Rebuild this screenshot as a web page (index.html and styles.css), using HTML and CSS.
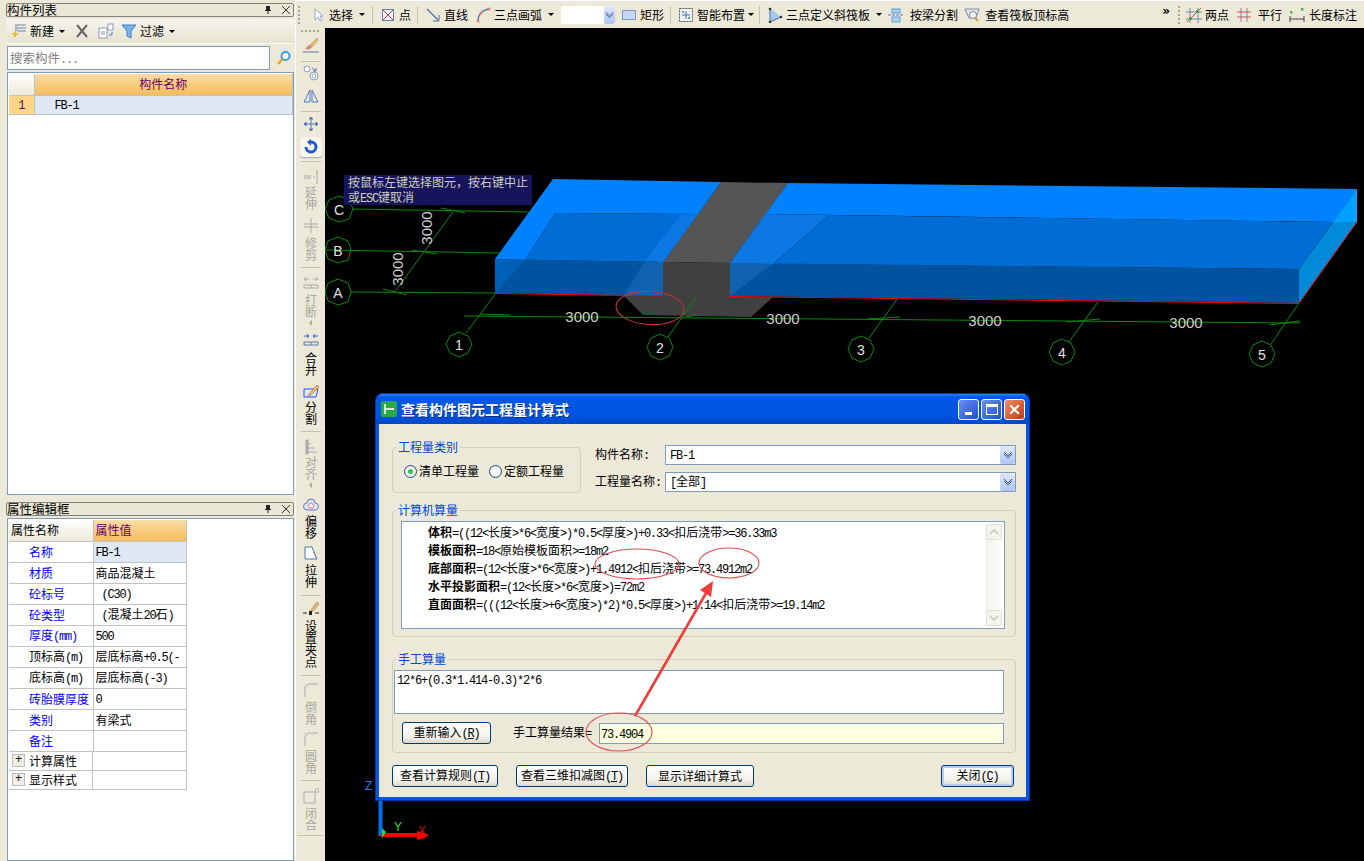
FILE: index.html
```html
<!DOCTYPE html>
<html lang="zh-CN">
<head>
  <meta charset="UTF-8" />
  <title>查看构件图元工程量计算式</title>
  <link rel="stylesheet" href="styles.css">
</head>
<body>
<div class="app">

  <aside class="side">
    <section class="dock dock-list">
      <div class="dock-title">
        <span>构件列表</span>
        <svg class="pin" viewBox="0 0 10 10"><path d="M3 1h4v4h1v1H5.500v3h-1V6H2V5h1z" fill="#222"/></svg>
        <svg class="x" viewBox="0 0 10 10"><path d="M1 1l8 8M9 1l-8 8" stroke="#333" fill="none"/></svg>
      </div>
      <div class="list-tools">
        <svg class="ic" viewBox="0 0 16 16"><rect x="1" y="10" width="6" height="2" fill="#e8c040"/><rect x="3" y="8" width="2" height="6" fill="#e8c040"/><path d="M6 2h9M6 5h9M6 8h9" stroke="#6a7fa8"/><path d="M5 1v7" stroke="#6a7fa8"/></svg>
        <span class="tool-txt">新建</span><i class="arrow"></i>
        <svg class="ic ic-del" viewBox="0 0 16 16"><path d="M3 2l10 12M13 2L3 14" stroke="#666" stroke-width="2" fill="none"/></svg>
        <svg class="ic ic-copy" viewBox="0 0 16 16"><rect x="1" y="5" width="8" height="10" fill="#fff" stroke="#8a9ab8"/><rect x="10" y="1" width="5" height="6" fill="#fff" stroke="#8a9ab8"/><path d="M3 9h4M3 11h4" stroke="#8a9ab8"/><path d="M14 9v3h-3" stroke="#4a78c8" fill="none"/></svg>
        <svg class="ic ic-filter" viewBox="0 0 16 16"><path d="M1 2h14L10 8v7l-4-2V8z" fill="#7cb2ea" stroke="#3f7ac2"/></svg>
        <span class="tool-txt">过滤</span><i class="arrow"></i>
      </div>
      <div class="search-row">
        <div class="search-box">搜索构件<span class="m">...</span></div>
        <svg class="ic" viewBox="0 0 16 16"><circle cx="9.500" cy="6" r="4" fill="#fff" stroke="#3d9be8" stroke-width="2"/><path d="M6.500 9L2 14" stroke="#e8a030" stroke-width="2.500"/></svg>
      </div>
      <div class="grid-frame">
        <table class="grid list-grid">
          <tr><th class="num"></th><th class="head-on">构件名称</th></tr>
          <tr class="row-on"><td class="num-on"><span class="m">1</span></td><td class="fb"><span class="m">FB-1</span></td></tr>
        </table>
      </div>
    </section>

    <section class="dock dock-props">
      <div class="dock-title">
        <span>属性编辑框</span>
        <svg class="pin" viewBox="0 0 10 10"><path d="M3 1h4v4h1v1H5.500v3h-1V6H2V5h1z" fill="#222"/></svg>
        <svg class="x" viewBox="0 0 10 10"><path d="M1 1l8 8M9 1l-8 8" stroke="#333" fill="none"/></svg>
      </div>
      <div class="grid-frame">
        <table class="grid prop-grid">
          <tr><th class="pname-head">属性名称</th><th class="head-on pval-head">属性值</th></tr>
          <tr><td class="pn blue">名称</td><td class="pv cell-on"><span class="m">FB-1</span></td></tr>
          <tr><td class="pn blue">材质</td><td class="pv">商品混凝土</td></tr>
          <tr><td class="pn blue">砼标号</td><td class="pv"><span class="m">&nbsp;(C30)</span></td></tr>
          <tr><td class="pn blue">砼类型</td><td class="pv"><span class="m">&nbsp;(</span>混凝土<span class="m">20</span>石<span class="m">)</span></td></tr>
          <tr><td class="pn blue">厚度<span class="m">(mm)</span></td><td class="pv"><span class="m">500</span></td></tr>
          <tr><td class="pn">顶标高<span class="m">(m)</span></td><td class="pv">层底标高<span class="m">+0.5(-</span></td></tr>
          <tr><td class="pn">底标高<span class="m">(m)</span></td><td class="pv">层底标高<span class="m">(-3)</span></td></tr>
          <tr><td class="pn blue">砖胎膜厚度</td><td class="pv"><span class="m">0</span></td></tr>
          <tr><td class="pn blue">类别</td><td class="pv">有梁式</td></tr>
          <tr><td class="pn blue">备注</td><td class="pv"></td></tr>
          <tr class="short"><td class="pg"><i class="plus">+</i>计算属性</td><td class="pv"></td></tr>
          <tr class="short"><td class="pg"><i class="plus">+</i>显示样式</td><td class="pv"></td></tr>
        </table>
      </div>
    </section>
  </aside>

  <div class="work">
    <header class="topbar">
      <i class="grip"></i>
      <div class="tb t-sel">
        <svg class="ic" viewBox="0 0 16 16"><path d="M5 2v11l3-3 2 4 2-1-2-4h3z" fill="#fff" stroke="#9aa8c4"/></svg>
        <span>选择</span><i class="arrow"></i>
      </div>
      <i class="tsep"></i>
      <div class="tb">
        <svg class="ic" viewBox="0 0 16 16"><rect x="2.500" y="2.500" width="11" height="11" fill="#e8eefa" stroke="#6a7fa8"/><path d="M3 3l10 10M13 3L3 13" stroke="#d84040"/></svg>
        <span>点</span>
      </div>
      <i class="tsep tsep-b"></i>
      <div class="tb">
        <svg class="ic" viewBox="0 0 16 16"><path d="M2 2l11 11" stroke="#4a6ea8" stroke-width="1.200"/><path d="M14 8v6H8" stroke="#4a6ea8" fill="none"/></svg>
        <span>直线</span>
      </div>
      <div class="tb t-arc">
        <svg class="ic" viewBox="0 0 16 16"><path d="M3 14C3 8 7 3 14 2" stroke="#4a78b8" stroke-width="1.300" fill="none"/><circle cx="3" cy="14" r="1.500" fill="#e08080"/><circle cx="6" cy="6" r="1.500" fill="#e08080"/><circle cx="14" cy="2" r="1.500" fill="#e08080"/></svg>
        <span>三点画弧</span><i class="arrow"></i>
      </div>
      <div class="combo t-combo"><b class="drop"><svg viewBox="0 0 10 8"><path d="M1 1l4 4 4-4M1 3l4 4 4-4" stroke="#3f5480" fill="none"/></svg></b></div>
      <div class="tb">
        <svg class="ic" viewBox="0 0 16 16"><rect x="1.500" y="3.500" width="13" height="9" fill="#c4d8f6" stroke="#7a98c8"/></svg>
        <span>矩形</span>
      </div>
      <i class="tsep tsep-b"></i>
      <div class="tb t-smart">
        <svg class="ic" viewBox="0 0 16 16"><rect x="1.500" y="1.500" width="13" height="13" fill="#eef2fa" stroke="#555" stroke-dasharray="2 1"/><path d="M8 4v8M4 8h8" stroke="#4a6ea8"/><circle cx="5" cy="5" r="1" fill="#3a8a3a"/><circle cx="11" cy="11" r="1" fill="#3a8a3a"/></svg>
        <span>智能布置</span><i class="arrow"></i>
      </div>
      <i class="tsep tsep-c"></i>
      <div class="tb">
        <svg class="ic" viewBox="0 0 16 16"><path d="M3 1l11 9-11 5z" fill="#a8c8ee"/><path d="M3 1v14l11-5" stroke="#4a6ea8" fill="none"/><circle cx="3" cy="2" r="1.300" fill="#333"/><circle cx="14" cy="10" r="1.300" fill="#333"/><circle cx="3" cy="15" r="1.300" fill="#333"/></svg>
        <span>三点定义斜筏板</span><i class="arrow"></i>
      </div>
      <div class="tb t-split">
        <svg class="ic" viewBox="0 0 16 16"><rect x="4" y="2" width="8" height="4" fill="#a8d4f4" stroke="#6a98d0"/><rect x="4" y="10" width="8" height="5" fill="#a8d4f4" stroke="#6a98d0"/><path d="M0 8h16" stroke="#5a7ab8" stroke-dasharray="3 1"/></svg>
        <span>按梁分割</span>
      </div>
      <div class="tb t-look">
        <svg class="ic" viewBox="0 0 16 16"><path d="M1 2h14l-3 9H5z" fill="#dfe6f2" stroke="#7a8aa8"/><circle cx="9" cy="8" r="3.500" fill="#f4f8ff" stroke="#888"/><path d="M11 11l3 3" stroke="#d8a040" stroke-width="2"/></svg>
        <span>查看筏板顶标高</span>
      </div>
      <span class="more">»</span>
      <i class="grip grip-b"></i>
      <div class="tb">
        <svg class="ic" viewBox="0 0 16 16"><path d="M4 1v15M12 1v15M0 5h16M0 12h16" stroke="#7a88a8"/><path d="M1 15L15 1" stroke="#d84040"/><rect x="10" y="3" width="3" height="3" fill="#50a050"/><rect x="3" y="10" width="3" height="3" fill="#50a050"/></svg>
        <span>两点</span>
      </div>
      <div class="tb t-par">
        <svg class="ic" viewBox="0 0 16 16"><path d="M5 1v14M11 1v14" stroke="#7a88b8"/><path d="M1 5h14M1 10h14" stroke="#d05050"/></svg>
        <span>平行</span>
      </div>
      <div class="tb t-dim">
        <svg class="ic" viewBox="0 0 16 16"><rect x="1" y="4" width="2.500" height="2.500" fill="#50b050"/><rect x="12" y="1" width="2.500" height="2.500" fill="#50b050"/><path d="M1 9v6M15 9v6M1 12h14" stroke="#444"/></svg>
        <span>长度标注</span><i class="arrow"></i>
      </div>
    </header>

    <div class="stage">
      <nav class="vbar">
        <i class="vgrip"></i>
        <div class="vi t5"><svg class="ic" viewBox="0 0 16 16"><path d="M14 1L7 8l2 2 6-7z" fill="#e8c070" stroke="#a88848" stroke-width=".6"/><path d="M7 8c-3 0-3 3-5 4 3 1 6 0 7-2z" fill="#d8808a"/><path d="M0 15h16" stroke="#5a7ab0"/></svg></div>
        <i class="vsep t8"></i>
        <div class="vi t3"><svg class="ic" viewBox="0 0 16 16"><circle cx="4" cy="4" r="3" fill="#fff" stroke="#8a9ab8"/><circle cx="11" cy="11" r="4" fill="#fff" stroke="#8a9ab8"/><circle cx="11" cy="11" r="2" fill="none" stroke="#8a9ab8"/><path d="M9 3l4 3M13 3v3h-3" stroke="#5a7ab0" fill="none"/></svg></div>
        <div class="vi t7"><svg class="ic" viewBox="0 0 16 16"><path d="M7 2v12H1zM9 2v12h6z" fill="#dfe8f6" stroke="#5a7ab0"/></svg></div>
        <i class="vsep t7"></i>
        <div class="vi t4"><svg class="ic" viewBox="0 0 16 16"><path d="M8 1v14M1 8h14M8 1L6 3h4zM8 15l-2-2h4zM1 8l2-2v4zM15 8l-2-2v4z" stroke="#5a7ab0" fill="#5a7ab0"/></svg></div>
        <div class="vi t5 v-on"><svg class="ic" viewBox="0 0 16 16"><path d="M8 3a5 5 0 1 1-5 5" stroke="#1a5ad8" stroke-width="3" fill="none"/><path d="M8 0v7L4 3z" fill="#1a5ad8"/></svg></div>
        <i class="vsep t4"></i>
        <div class="vi t6 off s2"><svg class="ic" viewBox="0 0 16 16"><path d="M1 8h7M1 10h7M10 9h2M14 2v14" stroke="#aaa"/></svg><span>延伸</span></div>
        <div class="vi t7 off s4"><svg class="ic" viewBox="0 0 16 16"><path d="M1 7h14M1 10h14M8 1v15" stroke="#aaa"/></svg><span>修剪</span></div>
        <i class="vsep t6"></i>
        <div class="vi t6 off s4"><svg class="ic" viewBox="0 0 16 16"><path d="M1 5h5M15 5h-5M3 3L1 5l2 2M13 3l2 2-2 2" stroke="#aaa" fill="none"/><path d="M1 11h14v3H1zM8 11v3" stroke="#aaa" fill="none"/></svg><span>打断</span><em class="small-arrow"></em></div>
        <div class="vi t5 s5"><svg class="ic" viewBox="0 0 16 16"><path d="M1 5h5M15 5h-5M4 3l2 2-2 2M12 3l-2 2 2 2" stroke="#2f62c8" fill="none"/><path d="M1 11h14v3H1zM8 11v3" stroke="#5a7ab0" fill="none"/></svg><span>合并</span></div>
        <div class="vi t7 s2"><svg class="ic" viewBox="0 0 16 16"><path d="M1 6h14l-2 8H1z" fill="#dfe8fa" stroke="#2f4fe0"/><path d="M6 11l8-9 2 2-8 8-3 1z" fill="#e8c070" stroke="#a06030" stroke-width=".6"/></svg><span>分割</span></div>
        <i class="vsep t6"></i>
        <div class="vi t7 off s1"><svg class="ic" viewBox="0 0 16 16"><path d="M3 1h2v14H3zM5 13h9M5 9h6M5 5h3" stroke="#aaa" fill="#aaa"/></svg><span>对齐</span><em class="small-arrow"></em></div>
        <div class="vi t9 s2"><svg class="ic" viewBox="0 0 16 16"><path d="M4 13a3 3 0 0 1 0-7 4 4 0 0 1 8 0 3 3 0 0 1 0 7z" fill="#dfe8fa" stroke="#5a7ab0"/><path d="M6 11a2 2 0 0 1 0-3 2 2 0 0 1 4 0 2 2 0 0 1 0 3z" fill="#fff" stroke="#e06a70"/></svg><span>偏移</span></div>
        <div class="vi t6 s3"><svg class="ic" viewBox="0 0 16 16"><path d="M2 2h7l5 12H2z" fill="#fff" stroke="#4a78b8"/><path d="M10 7l1 1M11 10h1M12 12h1" stroke="#888"/></svg><span>拉伸</span></div>
        <i class="vsep t7"></i>
        <div class="vi t4 s4"><svg class="ic" viewBox="0 0 16 16"><path d="M8 10l6-8 2 2-6 7-3 1z" fill="#e8c070" stroke="#a06030" stroke-width=".6"/><path d="M0 13h4M12 13h4" stroke="#222"/><rect x="6" y="11" width="3" height="4" fill="#222"/></svg><span>设置夹点</span></div>
        <i class="vsep t7"></i>
        <div class="vi t6 off s3"><svg class="ic" viewBox="0 0 16 16"><path d="M2 15V5l3-3h10" stroke="#aaa" fill="none"/><path d="M1 2l4 3" stroke="#ccc" stroke-dasharray="1 1"/></svg><span>倒角</span></div>
        <div class="vi t6 off s3"><svg class="ic" viewBox="0 0 16 16"><path d="M2 15V7q0-5 5-5h8" stroke="#aaa" fill="none"/><path d="M1 2l4 3" stroke="#ccc" stroke-dasharray="1 1"/></svg><span>圆角</span></div>
        <i class="vsep t6"></i>
        <div class="vi t7 off s3"><svg class="ic" viewBox="0 0 16 16"><path d="M12 4H1v11h11z" stroke="#aaa" fill="none"/><circle cx="14" cy="2.500" r="1.800" fill="#eee" stroke="#aaa"/></svg><span>闭合</span></div>
        <i class="vsep vend t4"></i>
      </nav>

      <main class="canvas">
        <svg class="scene" viewBox="325 28 1039 833">
          <!-- 右段 -->
          <polygon points="788,183 1357,189 1333,222 765,214" fill="#0082ff"/>
          <polygon points="829,215 1333,222 1299,269 773,264" fill="#006cd6"/>
          <polygon points="730,263 1299,269 1299,303 730,296" fill="#00539f"/>
          <polygon points="1299,269 1357,189 1357,222 1299,303" fill="#008ad8"/>
          <polygon points="1333,222 1357,189 1357,222" fill="#00a0ff"/>
          <!-- 后浇带 -->
          <polygon points="721,182 788,183 730,263 663,262" fill="#555"/>
          <polygon points="663,262 730,263 730,296 773,297 751,317 643,315 624,296 663,296" fill="#404040"/>
          <!-- 左段 -->
          <polygon points="553,179 721,182 698,214 555,213 525,260 495,259" fill="#0082ff"/>
          <polygon points="555,213 698,214 663,262 525,260" fill="#006cd6"/>
          <polygon points="681,215 698,214 663,262 645,261" fill="#0b78e4"/>
          <polygon points="495,259 663,262 663,296 495,293" fill="#00539f"/>
          <polygon points="495,259 525,260 495,293" fill="#0060b8"/>
          <polygon points="645,261 663,262 663,296 624,295" fill="#0f62b0"/>
          <polygon points="730,263 773,264 730,296" fill="#0f62b0"/>
          <polygon points="765,214 829,215 773,264 730,263" fill="#0b78e4"/>
          <!-- 红线 -->
          <path d="M495 293.500L663 296M730 296.500L1299 303.500L1357 222" stroke="#f00" fill="none"/>
          <!-- 轴线 -->
          <g stroke="#0a8a0a" fill="none" stroke-width="1">
            <path d="M352 209L529 212M326 250L501 253M351 292L496 293"/>
            <path d="M464 316L1300 323"/>
            <path d="M453 212L394 293M496 293L466 333M697 296L668 337M898 298L869 338M1098 302L1069 342M1299 303L1271 344"/>
            <path d="M441 208L465 213M412 250L437 254M383 289L407 295M480 314L510 315M685 317L698 315M867 319L900 317M1067 322L1100 319M1269 325L1300 321"/>
            <polygon points="339,196 349,200 353,209 349,219 339,222 329,218 325,209 329,200"/>
            <polygon points="338,237 348,241 351,250 348,260 338,263 328,259 325,250 328,241"/>
            <polygon points="338,279 348,283 351,292 348,302 338,305 328,301 325,292 328,283"/>
            <polygon points="459,332 468,336 472,344 468,353 459,357 450,353 446,344 450,336"/>
            <polygon points="660,334 669,338 673,347 669,356 660,360 651,356 647,347 651,338"/>
            <polygon points="861,336 870,340 874,349 870,358 861,362 852,358 848,349 852,340"/>
            <polygon points="1062,339 1071,343 1075,352 1071,361 1062,365 1053,361 1049,352 1053,343"/>
            <polygon points="1262,341 1271,345 1275,354 1271,363 1262,367 1253,363 1249,354 1253,345"/>
          </g>
          <g class="cad-txt">
            <text x="339" y="215">C</text><text x="338" y="256">B</text><text x="338" y="298">A</text>
            <text x="459" y="350">1</text><text x="660" y="353">2</text><text x="861" y="355">3</text><text x="1062" y="358">4</text><text x="1262" y="360">5</text>
            <text class="dim" x="582" y="322">3000</text><text class="dim" x="783" y="324">3000</text><text class="dim" x="985" y="326">3000</text><text class="dim" x="1186" y="328">3000</text>
            <text class="dim" transform="translate(432 228) rotate(-90)">3000</text>
            <text class="dim" transform="translate(403 269) rotate(-90)">3000</text>
          </g>
          <!-- 坐标 -->
          <path d="M380.500 800V836" stroke="#0070f0" stroke-width="4"/>
          <path d="M381 835H418" stroke="#f00" stroke-width="4"/>
          <polygon points="417,831 424,833 429,835 424,838 417,840" fill="#f00"/>
          <polygon points="382,828 386,832 382,838" fill="#20e020"/>
          <text class="axis ax-z" x="365" y="790">Z</text>
          <text class="axis ax-y" x="394" y="831">Y</text>
          <text class="axis ax-x" x="418" y="835">X</text>
        </svg>

        <div class="hint">按鼠标左键选择图元，按右键中止<br>或<span class="m">ESC</span>键取消</div>

        <div class="dialog">
          <div class="dlg-title">
            <svg class="dlg-ico" viewBox="0 0 16 16"><rect width="16" height="16" rx="2" fill="#2aa84a"/><path d="M4 3v10M4 8h7" stroke="#fff" stroke-width="1.500" fill="none"/><rect x="11" y="7" width="2" height="2" fill="#fff"/></svg>
            <span>查看构件图元工程量计算式</span>
            <div class="win-btns">
              <b class="wb wb-min"><i></i></b>
              <b class="wb wb-max"><i></i></b>
              <b class="wb wb-close"><svg viewBox="0 0 12 12"><path d="M2 2l8 8M10 2l-8 8" stroke="#fff" stroke-width="2"/></svg></b>
            </div>
          </div>
          <div class="dlg-body">
            <div class="dlg-top">
              <fieldset class="grp grp-type">
                <legend>工程量类别</legend>
                <div class="radios">
                  <label class="radio"><i class="dot dot-on"></i>清单工程量</label>
                  <label class="radio"><i class="dot"></i>定额工程量</label>
                </div>
              </fieldset>
              <div class="dlg-fields">
                <div class="field"><span class="f-label">构件名称<span class="m">:</span></span><div class="combo f-combo"><span><span class="m">FB-1</span></span><b class="drop"><svg viewBox="0 0 10 8"><path d="M1 1l4 4 4-4M1 3l4 4 4-4" stroke="#3f5480" fill="none"/></svg></b></div></div>
                <div class="field"><span class="f-label">工程量名称<span class="m">:</span></span><div class="combo f-combo"><span><span class="m">[</span>全部<span class="m">]</span></span><b class="drop"><svg viewBox="0 0 10 8"><path d="M1 1l4 4 4-4M1 3l4 4 4-4" stroke="#3f5480" fill="none"/></svg></b></div></div>
              </div>
            </div>

            <fieldset class="grp grp-calc">
              <legend>计算机算量</legend>
              <div class="calc-box">
                <div class="calc-lines">
                  <div><b>体积</b><span class="m">=((12&lt;</span>长度<span class="m">&gt;*6&lt;</span>宽度<span class="m">&gt;)*0.5&lt;</span>厚度<span class="m">&gt;)+0.33&lt;</span>扣后浇带<span class="m">&gt;=36.33m3</span></div>
                  <div><b>模板面积</b><span class="m">=18&lt;</span>原始模板面积<span class="m">&gt;=18m2</span></div>
                  <div><b>底部面积</b><span class="m">=(12&lt;</span>长度<span class="m">&gt;*6&lt;</span>宽度<span class="m">&gt;)+1.4912&lt;</span>扣后浇带<span class="m">&gt;=73.4912m2</span></div>
                  <div><b>水平投影面积</b><span class="m">=(12&lt;</span>长度<span class="m">&gt;*6&lt;</span>宽度<span class="m">&gt;)=72m2</span></div>
                  <div><b>直面面积</b><span class="m">=(((12&lt;</span>长度<span class="m">&gt;+6&lt;</span>宽度<span class="m">&gt;)*2)*0.5&lt;</span>厚度<span class="m">&gt;)+1.14&lt;</span>扣后浇带<span class="m">&gt;=19.14m2</span></div>
                </div>
                <div class="scroll">
                  <b class="sb"><svg viewBox="0 0 10 6"><path d="M1 5l4-4 4 4" stroke="#c4c4b8" stroke-width="1.500" fill="none"/></svg></b>
                  <b class="sb"><svg viewBox="0 0 10 6"><path d="M1 1l4 4 4-4" stroke="#c4c4b8" stroke-width="1.500" fill="none"/></svg></b>
                </div>
              </div>
            </fieldset>

            <fieldset class="grp grp-hand">
              <legend>手工算量</legend>
              <div class="hand-box"><span class="m">12*6+(0.3*1.414-0.3)*2*6</span></div>
              <div class="hand-row">
                <button class="btn btn-reset">重新输入<span class="m">(<u>R</u>)</span></button>
                <span class="hand-label">手工算量结果<span class="m">=</span></span>
                <div class="hand-result"><span class="m">73.4904</span></div>
              </div>
            </fieldset>

            <div class="dlg-foot">
              <button class="btn btn-rule">查看计算规则<span class="m">(<u>T</u>)</span></button>
              <button class="btn btn-3d">查看三维扣减图<span class="m">(<u>T</u>)</span></button>
              <button class="btn btn-detail">显示详细计算式</button>
              <button class="btn btn-close">关闭<span class="m">(<u>C</u>)</span></button>
            </div>
          </div>
        </div>

        <svg class="marks" viewBox="325 28 1039 833">
          <g fill="none" stroke="#e04a50" stroke-width="1.100">
            <ellipse cx="650" cy="308" rx="34" ry="16.500" transform="rotate(3 650 308)" stroke="#c83040"/>
            <ellipse cx="637" cy="564" rx="42" ry="15"/>
            <ellipse cx="729" cy="563" rx="30" ry="15"/>
            <ellipse cx="619" cy="732" rx="33" ry="19"/>
          </g>
          <path d="M635 716L709 588" stroke="#f23c3c" stroke-width="2.600"/>
          <polygon points="713,581 711,597 700,590" fill="#f23c3c"/>
        </svg>
      </main>
    </div>
  </div>
</div>
</body>
</html>
```

FILE: styles.css
```css
* {
  box-sizing: border-box;
}

html, body {
  margin: 0;
  height: 100%;
  overflow: hidden;
}

body {
  font: 12px/16px "Noto Sans CJK SC", sans-serif;
  color: #000;
  background: #ece9d8;
}

i, em {
  font-style: normal;
}

/* 半角字符，宽度 6px */
.m {
  font-family: "Liberation Mono", monospace;
  font-size: 12px;
  letter-spacing: -1.2px;
}

.ic {
  width: 16px;
  height: 16px;
  flex: none;
  display: block;
}

.app {
  display: flex;
  height: 861px;
}

.arrow {
  display: inline-block;
  flex: none;
  width: 0;
  height: 0;
  border: 3px solid transparent;
  border-top: 3px solid #000;
  border-bottom: 0;
}

/* 左侧面板 */
.side {
  width: 296px;
  flex: none;
  display: flex;
  flex-direction: column;
  padding: 3px 1px 0 6px;
  border-right: 1px solid #fff;
}

.dock {
  display: flex;
  flex-direction: column;
}

.dock-list {
  height: 492px;
}

.dock-props {
  margin-top: 7px;
  flex: 1;
  min-height: 0;
}

.dock-title {
  height: 14px;
  flex: none;
  display: flex;
  align-items: center;
  gap: 8px;
  border: 1px solid #85837a;
  border-radius: 2px;
  background: #ebe8d7;
  line-height: 12px;
  font-size: 12.500px;
  padding-right: 2px;
}

.dock-title span {
  flex: 1;
}

.pin, .x {
  width: 10px;
  height: 10px;
  flex: none;
}

.list-tools {
  height: 25px;
  margin-top: 2px;
  display: flex;
  align-items: center;
  padding-left: 5px;
  background: linear-gradient(#f6f5ed, #e6e3d0);
  border-bottom: 1px solid #fbfaf4;
}

.tool-txt {
  margin: 0 5px 0 3px;
}

.ic-del {
  margin-left: 9px;
}

.ic-copy {
  margin-left: 8px;
}

.ic-filter {
  margin: 0 0 0 7px;
}

.search-row {
  height: 24px;
  margin-top: 2px;
  display: flex;
  align-items: center;
  gap: 6px;
}

.search-box {
  width: 263px;
  margin-left: 1px;
  height: 24px;
  border: 1px solid #7f9db9;
  background: #fff;
  color: #808080;
  padding: 3px 2px;
  font-size: 12.500px;
}

.grid-frame {
  flex: 1;
  min-height: 0;
  margin-left: 1px;
  margin-top: 2px;
  border: 1px solid #7f9db9;
  background: #fff;
  padding: 1px;
}

.grid {
  border-collapse: collapse;
  table-layout: fixed;
}

.grid th, .grid td {
  padding: 0;
  border: 1px solid #c2c2c2;
  border-top: 0;
  border-left: 0;
  font-weight: 400;
}

.list-grid {
  width: 284px;
}

.list-grid th {
  height: 21px;
}

.list-grid td {
  height: 19px;
}

.num {
  width: 25px;
  background: linear-gradient(#fff, #ece9d8);
}

.head-on {
  background: linear-gradient(#fbdda4, #f4bc5c);
  color: #660066;
}

.num-on {
  background: #ffd58a;
  color: #660066;
  text-align: center;
}

.row-on td.fb, .cell-on {
  background: #dfe8f5;
}

.fb {
  padding-left: 20px !important;
}

.prop-grid {
  width: 178px;
}

.prop-grid tr {
  height: 21px;
}

.prop-grid tr.short {
  height: 19px;
}

.pname-head {
  width: 84px;
  text-align: left;
  padding-left: 2px !important;
  background: linear-gradient(#fff, #ece9d8);
}

.pval-head {
  text-align: left;
  padding-left: 2px !important;
}

.pn {
  padding-left: 20px !important;
  white-space: nowrap;
}

.blue {
  color: #0000f0;
}

.pv {
  padding-left: 2px !important;
  white-space: nowrap;
}

.pg {
  padding-left: 2px !important;
  display: flex;
  align-items: center;
  height: 19px;
  gap: 4px;
}

.plus {
  width: 13px;
  height: 13px;
  border: 1px solid #bbb;
  background: #f0efe6;
  font: 12px/11px "Liberation Mono", monospace;
  text-align: center;
  margin-left: 1px;
}

/* 顶部工具栏 */
.work {
  flex: 1;
  min-width: 0;
  display: flex;
  flex-direction: column;
}

.topbar {
  height: 28px;
  flex: none;
  display: flex;
  align-items: center;
  padding: 0 0 0 2px;
  background: #ece9d8;
  white-space: nowrap;
  overflow: hidden;
  border-top: 1px solid #fff;
}

.grip {
  width: 2px;
  height: 18px;
  flex: none;
  background: repeating-linear-gradient(#a8a798 0 2px, transparent 2px 4px);
}

.grip-b {
  margin-left: 8px;
}

.tsep {
  width: 1px;
  height: 18px;
  flex: none;
  margin: 0 7px;
  background: #c5c2b0;
}

.tsep-b {
  margin-left: 6px;
}

.tsep-c {
  margin-left: 5px;
}

.tb {
  display: flex;
  align-items: center;
  gap: 3px;
  flex: none;
}

.tb .arrow {
  margin-left: 3px;
}

.t-smart .arrow {
  margin-left: 0;
}

.t-sel {
  margin-left: 10px;
}

.t-arc {
  margin-left: 7px;
}

.combo {
  display: flex;
  align-items: center;
  background: #fff;
}

.t-combo {
  width: 54px;
  height: 18px;
  margin: 0 6px 0 7px;
  justify-content: flex-end;
  flex: none;
}

.drop {
  width: 11px;
  height: 17px;
  display: flex;
  align-items: center;
  justify-content: center;
  background: linear-gradient(#dfe8fe, #aec6f6);
  border-radius: 2px;
  flex: none;
}

.t-combo .drop {
  height: 18px;
}

.drop svg {
  width: 9px;
  height: 8px;
}

.t-split {
  margin-left: 6px;
  gap: 6px;
}

.t-look {
  margin-left: 6px;
  gap: 5px;
}

.more {
  margin-left: 93px;
  font: 700 12px/12px "DejaVu Sans", sans-serif;
  position: relative;
  top: -4px;
}

.grip-b + .tb {
  margin-left: 6px;
}

.t-par {
  margin-left: 7px;
  gap: 6px;
}

.t-dim {
  margin-left: 7px;
  gap: 4px;
}

/* 绘图区 */
.stage {
  flex: 1;
  min-height: 0;
  display: flex;
}

.vbar {
  width: 29px;
  flex: none;
  display: flex;
  flex-direction: column;
  align-items: center;
  background: #ece9d8;
}

.vgrip {
  width: 20px;
  height: 2px;
  margin-top: 2px;
  flex: none;
  background: repeating-linear-gradient(90deg, #a8a798 0 2px, transparent 2px 4px);
}

.vi {
  display: flex;
  flex-direction: column;
  align-items: center;
  flex: none;
}

.vi span {
  writing-mode: vertical-rl;
  text-orientation: upright;
  line-height: 12px;
}

.t3 { margin-top: 3px; }
.t4 { margin-top: 4px; }
.t5 { margin-top: 5px; }
.t6 { margin-top: 6px; }
.t7 { margin-top: 7px; }
.t8 { margin-top: 8px; }
.t9 { margin-top: 9px; }

.s1 span { margin-top: 1px; }
.s2 span { margin-top: 2px; }
.s3 span { margin-top: 3px; }
.s4 span { margin-top: 4px; }
.s5 span { margin-top: 5px; }

.v-on {
  width: 22px;
  height: 20px;
  justify-content: center;
  background: #f6f5ee;
  border-radius: 3px;
  box-shadow: 0 1px 1px #aaa;
}

.off {
  color: #a8a8a0;
}

.small-arrow {
  width: 0;
  height: 0;
  margin-top: 2px;
  border: 3px solid transparent;
  border-right: 3px solid #a8a8a0;
  border-left: 0;
}

.vsep {
  width: 20px;
  height: 1px;
  flex: none;
  background: #c5c2b0;
}

.vsep.vend {
  width: 27px;
}

.canvas {
  flex: 1;
  min-width: 0;
  position: relative;
  background: #000;
  overflow: hidden;
}

.scene, .marks {
  position: absolute;
  left: 0;
  top: 0;
  width: 1039px;
  height: 833px;
}

.marks {
  pointer-events: none;
}

.cad-txt text {
  font: 14px "Liberation Sans", sans-serif;
  fill: #e0e0e0;
  text-anchor: middle;
}

.cad-txt .dim {
  font-size: 15px;
  fill: #cfcfcf;
}

.axis {
  font: 12px "Liberation Sans", sans-serif;
}

.ax-z {
  fill: #1a80f0;
}

.ax-y {
  fill: #20e020;
}

.ax-x {
  fill: #e00000;
}

.hint {
  position: absolute;
  left: 19px;
  top: 147px;
  width: 188px;
  height: 30px;
  padding: 0 4px;
  background: #16145a;
  color: #cfcfb8;
  line-height: 14.500px;
  white-space: nowrap;
}

/* 对话框 */
.dialog {
  position: absolute;
  left: 51px;
  top: 366px;
  width: 653px;
  height: 406px;
  display: flex;
  flex-direction: column;
  border: 3px solid #0a56dc;
  border-top: 0;
  border-radius: 7px 7px 0 0;
  background: #ece9d8;
  box-shadow: 0 0 0 1px #0036a8;
}

.dlg-title {
  height: 30px;
  flex: none;
  margin: 0 -3px;
  display: flex;
  align-items: center;
  padding: 0 4px 0 5px;
  background: linear-gradient(#2f86f4 0, #0058e6 3px, #0055e0 70%, #0048c8 100%);
  border-radius: 7px 7px 0 0;
  color: #fff;
  font-weight: 700;
  font-size: 14px;
  text-shadow: 1px 1px 0 #0a2c88;
}

.dlg-ico {
  width: 16px;
  height: 16px;
  margin-right: 4px;
  flex: none;
}

.dlg-title span {
  flex: 1;
}

.win-btns {
  display: flex;
  gap: 2px;
}

.wb {
  width: 21px;
  height: 21px;
  display: flex;
  align-items: center;
  justify-content: center;
  border: 1px solid #fff;
  border-radius: 3px;
  background: linear-gradient(135deg, #6a90f0, #1f4fd8);
}

.wb-min i {
  width: 7px;
  height: 3px;
  background: #fff;
  margin-top: 8px;
}

.wb-max i {
  width: 12px;
  height: 11px;
  border: 1px solid #fff;
  border-top-width: 3px;
}

.wb-close {
  background: linear-gradient(135deg, #f0906a, #c8340c);
}

.wb-close svg {
  width: 13px;
  height: 13px;
}

.dlg-body {
  flex: 1;
  min-height: 0;
  display: flex;
  flex-direction: column;
  padding: 16px 10px 0 13px;
}

.grp {
  margin: 0;
  padding: 0;
  border: 1px solid #d0d0bf;
  border-radius: 4px;
  min-width: 0;
}

.grp legend {
  padding: 0 2px 0 1px;
  margin-left: 4px;
  color: #0046d5;
  line-height: 14px;
}

.dlg-top {
  display: flex;
  height: 55px;
}

.grp-type {
  width: 189px;
  flex: none;
  height: 53px;
}

.radios {
  display: flex;
  gap: 10px;
  padding: 9px 0 0 11px;
}

.radio {
  display: flex;
  align-items: center;
  gap: 2px;
}

.dot {
  width: 13px;
  height: 13px;
  border-radius: 50%;
  border: 1px solid #1c5180;
  background: radial-gradient(#fff 30%, #dcdcd2);
  display: flex;
  align-items: center;
  justify-content: center;
}

.dot-on::after {
  content: "";
  width: 5px;
  height: 5px;
  border-radius: 50%;
  background: #3ec04a;
}

.dlg-fields {
  flex: 1;
  display: flex;
  flex-direction: column;
  gap: 7px;
  margin-left: 14px;
  margin-top: 5px;
}

.field {
  display: flex;
  align-items: center;
  height: 20px;
}

.f-label {
  width: 70px;
  flex: none;
  white-space: nowrap;
}

.f-combo {
  flex: 1;
  height: 20px;
  border: 1px solid #7f9db9;
  padding-left: 4px;
  justify-content: space-between;
}

.f-combo .drop {
  width: 15px;
  height: 18px;
}

.f-combo .drop svg {
  width: 10px;
}

.grp-calc {
  margin-top: 8px;
  height: 134px;
}

.calc-box {
  height: 108px;
  margin: 4px 10px 0 8px;
  border: 1px solid #7f9db9;
  background: #fff;
  display: flex;
  justify-content: space-between;
  padding: 2px 2px 2px 26px;
}

.calc-lines {
  line-height: 16px;
  white-space: nowrap;
}

.calc-lines b {
  font-weight: 700;
}

.scroll {
  width: 16px;
  display: flex;
  flex-direction: column;
  justify-content: space-between;
  background: linear-gradient(90deg, #f3f2ea, #fff);
}

.sb {
  height: 16px;
  display: flex;
  align-items: center;
  justify-content: center;
  border: 1px solid #e0e0d6;
  border-radius: 2px;
  background: #f4f3ec;
}

.sb svg {
  width: 10px;
  height: 6px;
}

.grp-hand {
  margin-top: 15px;
  height: 101px;
}

.hand-box {
  height: 44px;
  margin: 4px 11px 0 1px;
  padding: 0 2px;
  border: 1px solid #7f9db9;
  background: #fff;
}

.hand-row {
  display: flex;
  align-items: center;
  margin: 8px 11px 0 9px;
}

.btn {
  height: 22px;
  padding: 0;
  flex: none;
  font: inherit;
  border: 1px solid #003c74;
  border-radius: 3px;
  background: linear-gradient(#fff, #f2f1ea 70%, #dcd8c8);
}

.btn-reset {
  width: 89px;
}

.hand-label {
  margin-left: 22px;
  width: 86px;
  flex: none;
}

.hand-result {
  flex: 1;
  height: 21px;
  padding: 1px 1px;
  border: 1px solid #7f9db9;
  background: #ffffe1;
}

.dlg-foot {
  display: flex;
  margin-top: 12px;
}

.btn-rule {
  width: 106px;
}

.btn-3d {
  width: 112px;
  margin-left: 18px;
}

.btn-detail {
  width: 108px;
  margin-left: 18px;
}

.btn-close {
  width: 73px;
  margin-left: auto;
  margin-right: 2px;
  box-shadow: inset 0 0 0 2px #b4cdf0;
}
```
